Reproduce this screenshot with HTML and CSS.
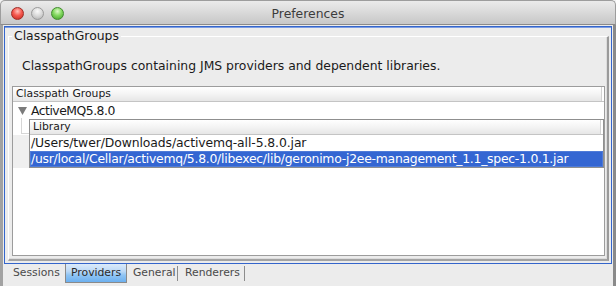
FILE: index.html
```html
<!DOCTYPE html>
<html>
<head>
<meta charset="utf-8">
<link rel="stylesheet" href="styles.css">
</head>
<body>
<div class="window">
  <div class="titlebar">
    <div class="lights">
      <span class="light red"></span>
      <span class="light gray"></span>
      <span class="light green"></span>
    </div>
    <div class="title">Preferences</div>
    <div></div>
  </div>
  <div class="frame">
    <div class="pane">
      <fieldset class="group">
        <legend class="group-title">ClasspathGroups</legend>
        <p class="desc">ClasspathGroups containing JMS providers and dependent libraries.</p>
        <div class="tree">
          <div class="tree-header">Classpath Groups</div>
          <div class="node">
            <svg class="twisty" width="9" height="8" viewBox="0 0 9 8"><polygon points="0,0 9,0 4.5,8" fill="#7b7b7b"/></svg>
            <span class="node-label">ActiveMQ5.8.0</span>
          </div>
          <div class="nested">
            <div class="gutter"><div class="branch"></div></div>
            <div class="lib-table">
              <div class="lib-header">Library</div>
              <div class="lib-row">/Users/twer/Downloads/activemq-all-5.8.0.jar</div>
              <div class="lib-row selected">/usr/local/Cellar/activemq/5.8.0/libexec/lib/geronimo-j2ee-management_1.1_spec-1.0.1.jar</div>
            </div>
          </div>
        </div>
      </fieldset>
    </div>
    <div class="tabs">
      <div class="tab t-sessions">Sessions</div>
      <div class="tab t-providers active">Providers</div>
      <div class="tab t-general">General</div>
      <div class="sep"></div>
      <div class="tab t-renderers">Renderers</div>
      <div class="sep"></div>
    </div>
  </div>
</div>
</body>
</html>
```
FILE: styles.css
```css
html, body {
  margin: 0;
  padding: 0;
}
body {
  width: 616px;
  height: 286px;
  overflow: hidden;
  background: #f2f2f2;
  font-family: "DejaVu Sans", "Noto Sans", sans-serif;
  color: #1a1a1a;
}
.window {
  width: 616px;
  height: 286px;
  display: flex;
  flex-direction: column;
}
.titlebar {
  height: 25px;
  box-sizing: border-box;
  border: 1px solid #9d9d9d;
  border-bottom-color: #8a8a8a;
  border-radius: 5px 5px 0 0;
  background: linear-gradient(#ebebeb, #d9d9d9 50%, #c7c7c7);
  display: grid;
  grid-template-columns: 1fr auto 1fr;
  align-items: center;
}
.lights {
  display: flex;
  gap: 7px;
  padding-left: 10px;
  padding-top: 1px;
}
.light {
  width: 13px;
  height: 13px;
  border-radius: 50%;
  box-sizing: border-box;
}
.light.red {
  background: radial-gradient(circle at 50% 30%, #ffc0ba 0, #f5594f 45%, #c0261d 100%);
  border: 1px solid #a12c25;
}
.light.gray {
  background: radial-gradient(circle at 50% 30%, #fafafa 0, #d8d8d8 50%, #ababab 100%);
  border: 1px solid #9a9a9a;
}
.light.green {
  background: radial-gradient(circle at 50% 30%, #dcf9c8 0, #82d85f 45%, #3f9c27 100%);
  border: 1px solid #418c2e;
}
.title {
  font-size: 12.4px;
  color: #3c3c3c;
  padding-top: 1px;
}
.frame {
  flex: 1;
  display: flex;
  flex-direction: column;
  border-left: 3px solid #a2a2a2;
  border-right: 3px solid #8a8a8a;
  background: #ececec;
  padding-top: 1px;
}
.pane {
  height: 238px;
  box-sizing: border-box;
  margin: 0 1px;
  border: 1px solid #3465cb;
  box-shadow: inset 0 1px 0 #7d9de0;
  padding: 1px 2px 2px 3px;
  display: flex;
  flex-direction: column;
}
.group {
  margin: 0;
  min-width: 0;
  padding: 0 2px 3px 3px;
  border-style: solid;
  border-width: 1px 2px 2px 1px;
  border-color: #ffffff #9a9a9a #a3a3a3 #ffffff;
  box-shadow: inset -1px -1px 0 #dcdcdc;
}
.group-title {
  font-size: 12.4px;
  line-height: 16px;
  padding: 0 2px;
}
.desc {
  margin: 14px 0 12px;
  padding-left: 10px;
  font-size: 12.4px;
  line-height: 16px;
}
.tree {
  height: 170px;
  box-sizing: border-box;
  border: 1px solid #9c9c9c;
  background: #ffffff;
}
.tree-header {
  height: 15px;
  box-sizing: border-box;
  border-bottom: 1px solid #c4c4c4;
  background: linear-gradient(#ffffff, #f4f4f4 50%, #e6e6e6);
  font-size: 10.8px;
  line-height: 14px;
  padding-left: 3px;
  box-shadow: inset -2px 0 0 #fff, inset -3px 0 0 #d2d2d2;
}
.node {
  height: 17px;
  display: flex;
  align-items: center;
  gap: 4px;
  padding-left: 5px;
  font-size: 12.4px;
}
.node-label {
  letter-spacing: -0.5px;
}
.twisty {
  display: block;
}
.nested {
  display: flex;
}
.gutter {
  width: 16px;
  background: linear-gradient(#ffffff 16px, #efefef 16px);
}
.branch {
  width: 8px;
  height: 16px;
  margin-left: 8px;
  margin-top: -1px;
  box-sizing: border-box;
  border-left: 1px solid #d6d6d6;
  border-bottom: 1px solid #d6d6d6;
}
.lib-table {
  flex: 1;
  border: 1px solid #8f8f8f;
  background: #ffffff;
}
.lib-header {
  height: 15px;
  box-sizing: border-box;
  border-bottom: 1px solid #c4c4c4;
  background: linear-gradient(#ffffff, #f4f4f4 50%, #e6e6e6);
  font-size: 10.8px;
  line-height: 14px;
  padding-left: 3px;
  box-shadow: inset -2px 0 0 #fff, inset -3px 0 0 #d2d2d2;
}
.lib-row {
  height: 16px;
  line-height: 16px;
  font-size: 12.4px;
  padding-left: 1px;
  white-space: nowrap;
  letter-spacing: -0.1px;
}
.lib-row.selected {
  background: #3466d2;
  color: #ffffff;
  box-shadow: inset 0 0 0 1px #4f7bd8;
  letter-spacing: -0.25px;
}
.tabs {
  display: flex;
  align-items: flex-start;
  height: 22px;
  font-size: 10.8px;
  color: #4a4a4a;
}
.tab {
  height: 19px;
  box-sizing: border-box;
  line-height: 18px;
  white-space: nowrap;
}
.t-sessions {
  width: 62px;
  padding-left: 10px;
}
.t-providers {
  width: 62px;
  padding-left: 5px;
}
.t-general {
  width: 50px;
  padding-left: 6px;
}
.t-renderers {
  width: 66px;
  padding-left: 7px;
}
.tab.active {
  border: 1px solid #8a8a8a;
  border-top: 0;
  color: #2a2a2a;
  background: linear-gradient(#dcebfa, #bcd9f6 40%, #8fc4f3 62%, #6cb0f0);
  line-height: 18px;
}
.sep {
  width: 1px;
  height: 15px;
  margin-top: 2px;
  background: #8c8c8c;
}
```
